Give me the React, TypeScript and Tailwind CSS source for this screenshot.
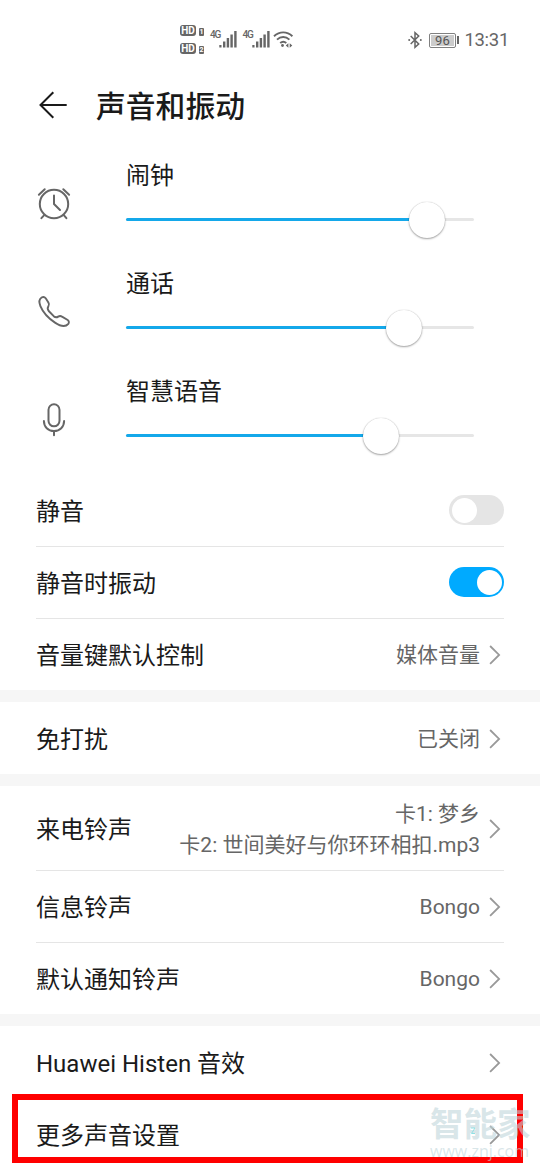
import React, { useState } from "react";

interface VolumeSliderProps {
  label: string;
  value: number;
  icon: React.ReactNode;
  onChange: (value: number) => void;
}

const AlarmIcon = () => (
  <svg width="36" height="36" viewBox="0 0 36 36" fill="none" stroke="#666" strokeWidth="2" strokeLinecap="round" strokeLinejoin="round">
    <circle cx="18" cy="18" r="14.2" />
    <path d="M18 9.5V18l6 6M2.9 8.8 8.7 3.2M33.1 8.8 27.3 3.2M8 29.3l-2.6 2.9M28 29.3l2.4 2.9" />
  </svg>
);

const PhoneIcon = () => (
  <svg width="36" height="36" viewBox="0 0 36 36" fill="none" stroke="#666" strokeWidth="1.9" strokeLinejoin="round">
    <path d="M5.6 3.5C7 2.6 8.7 2.9 9.7 4.3L12.4 8.4c.9 1.4.8 2.7 0 3.9-1.1 1.6-1 3 .3 4.7l5 5.2c1.5 1.3 3 1.4 4.5.4 1.2-.8 2.4-.9 3.8 0l5.3 3.2c1.7 1 2 2.7 1 4-2.5 3-7.4 2.7-13.3-1.2C11.9 23.9 7.1 18.6 4.4 12.1 3 8.6 3.1 5.1 5.6 3.5z" />
  </svg>
);

const MicIcon = () => (
  <svg width="36" height="36" viewBox="0 0 36 36" fill="none" stroke="#666" strokeWidth="2" strokeLinecap="round">
    <rect x="12.5" y="2.3" width="11" height="22" rx="5.5" />
    <path d="M7.9 19c0 5.8 4.2 10 10.1 10s10.1-4.2 10.1-10M18 29v4.3" />
  </svg>
);

const Chevron = () => (
  <svg className="ml-[6px] shrink-0" width="18" height="24" viewBox="0 0 18 24" fill="none" stroke="#999" strokeWidth="1.8">
    <path d="M4.1 3 13.1 11.9l-9 8.9" />
  </svg>
);

const SignalIcon = () => (
  <div className="flex w-[28px] items-start">
    <span className="w-[9px] text-[10px] leading-[10px] font-medium tracking-[-1.2px]">4G</span>
    <svg className="shrink-0" width="19" height="18" viewBox="0 0 19 18" fill="#666">
      <rect x="0.3" y="15" width="2.2" height="2.5" />
      <rect x="4" y="11.5" width="2.4" height="6" />
      <rect x="7.7" y="8" width="2.4" height="9.5" />
      <rect x="11.4" y="4.5" width="2.4" height="13" />
      <rect x="15.2" y="1" width="2.4" height="16.5" />
    </svg>
  </div>
);

const HdBadge = ({ sim }: { sim: number }) => (
  <div className="flex items-end gap-[3px]">
    <span className="flex h-[11px] w-[16px] items-center justify-center rounded-[3px] bg-[#666] pt-px text-[10px] leading-none font-bold text-white">
      HD
    </span>
    <span className="flex h-[8px] w-[5px] items-center justify-center rounded-[1px] bg-[#666] pt-px text-[7px] leading-none font-bold text-white">
      {sim}
    </span>
  </div>
);

const StatusBar = () => (
  <div className="flex h-[78px] items-start justify-between pr-[31px] pl-[180px] text-[#666]">
    <div className="flex">
      <div className="mt-[25px] flex flex-col gap-[7px]">
        <HdBadge sim={1} />
        <HdBadge sim={2} />
      </div>
      <div className="mt-[30px] ml-[6px] flex gap-[4.500px]">
        <SignalIcon />
        <SignalIcon />
      </div>
      <svg className="mt-[30px] ml-[2.5px]" width="22" height="20" viewBox="0 0 22 20" fill="none" stroke="#666" strokeWidth="1.9">
        <path d="M1 6.2c5.5-5.1 13-5.1 18.4 0M4 9.6c3.7-3.5 8.7-3.5 12.400 0M7.2 13c1.900-1.700 4.200-1.700 6.100 0" />
        <circle cx="9.500" cy="15.500" r="1.400" fill="#666" stroke="none" />
        <path d="m15.400 13.200-2.600 2.300 2.600 2.300zM16.700 13.200l2.600 2.300-2.600 2.300z" fill="#666" stroke="none" />
      </svg>
    </div>
    <div className="mt-[29px] flex h-[22px] items-center">
      <svg width="14" height="18" viewBox="0 0 14 18" fill="none" stroke="#666" strokeWidth="1.5">
        <path d="m2.7 5 8 8L7 16.3V1.7L10.7 5l-8 8" />
        <circle cx="1.2" cy="9" r="1" fill="#666" stroke="none" />
        <circle cx="12.8" cy="9" r="1" fill="#666" stroke="none" />
      </svg>
      <div className="ml-[7px] flex h-[15px] w-[27px] rounded-[2px] border border-[#808080] p-px">
        <span className="flex flex-1 items-center justify-center bg-[#ccc] pt-px text-[13px] leading-none text-[#555]">96</span>
      </div>
      <div className="ml-px h-[8px] w-[2px] bg-[#666]" />
      <span className="ml-[5.5px] text-[18.5px] leading-[22px] tracking-[-0.3px]">13:31</span>
    </div>
  </div>
);

const VolumeSlider: React.FC<VolumeSliderProps> = ({ label, value, icon, onChange }) => (
  <div className="flex h-[108px] pl-9">
    <div className="w-[90px] pt-[36px]">{icon}</div>
    <div className="w-[348px] pt-[8px]">
      <div className="text-2xl leading-9">{label}</div>
      <div className="relative mt-[7.5px] flex h-9 items-center">
        <div className="h-[3px] w-full rounded-full bg-[#e6e6e6]">
          <div className="h-full rounded-full bg-[#14a8ea]" style={{ width: `${value}%` }} />
        </div>
        <div
          className="absolute top-0 size-9 -translate-x-1/2 rounded-full bg-white shadow-[0_1px_2px_rgba(0,0,0,0.35),0_0_1px_rgba(0,0,0,0.25)]"
          style={{ left: `${value}%` }}
        />
        <input
          type="range"
          aria-label={label}
          value={value}
          step="0.1"
          onChange={(e) => onChange(Number(e.target.value))}
          className="absolute inset-0 h-full w-full cursor-pointer opacity-0"
        />
      </div>
    </div>
  </div>
);

const Toggle = ({ checked, onClick }: { checked: boolean; onClick: () => void }) => (
  <button
    role="switch"
    aria-checked={checked}
    onClick={onClick}
    className={`mb-px flex h-[30px] w-[55px] items-center rounded-full px-[2.5px] ${
      checked ? "justify-end bg-[#00aaff]" : "justify-start bg-[#e5e5e5]"
    }`}
  >
    <span className="size-[25px] rounded-full bg-white" />
  </button>
);

const Row = ({ label, children, tall, first }: { label: string; children?: React.ReactNode; tall?: boolean; first?: boolean }) => (
  <div
    className={`mx-9 flex items-center justify-between ${tall ? "h-[84px]" : "h-[72px]"} ${
      first ? "pt-px" : "border-t border-[#e5e5e5]"
    }`}
  >
    <span className="pt-[2px] text-2xl">{label}</span>
    {children}
  </div>
);

const Value = ({ lines = [] }: { lines?: string[] }) => (
  <div className="flex items-center">
    <div className="pt-[2px] text-right text-[21px] leading-[31px] text-[#666]">
      {lines.map((line) => (
        <div key={line}>{line}</div>
      ))}
    </div>
    <Chevron />
  </div>
);

const Gap = () => <div className="h-3 bg-[#f6f6f6]" />;

const App: React.FC = () => {
  const [volumes, setVolumes] = useState({ alarm: 86.6, call: 80, voice: 73.3 });
  const [mute, setMute] = useState(false);
  const [vibrate, setVibrate] = useState(true);

  return (
    <div className="relative h-[1170px] w-[540px] overflow-hidden bg-white font-[Roboto,'Noto_Sans_CJK_SC',sans-serif] text-[#1a1a1a]">
      <StatusBar />
      <div className="flex h-[72px] items-start pl-[38px]">
        <svg className="mt-[13px]" width="30" height="28" viewBox="0 0 30 28" fill="none" stroke="#1a1a1a" strokeWidth="2">
          <path d="M28.7 14H3M15.3 1.2 2.5 14l12.8 12.8" />
        </svg>
        <h1 className="mt-[9px] ml-[28px] text-[29.8px] leading-[40px] font-medium">声音和振动</h1>
      </div>

      <VolumeSlider label="闹钟" value={volumes.alarm} icon={<AlarmIcon />} onChange={(alarm) => setVolumes({ ...volumes, alarm })} />
      <VolumeSlider label="通话" value={volumes.call} icon={<PhoneIcon />} onChange={(call) => setVolumes({ ...volumes, call })} />
      <VolumeSlider label="智慧语音" value={volumes.voice} icon={<MicIcon />} onChange={(voice) => setVolumes({ ...volumes, voice })} />

      <Row label="静音" first>
        <Toggle checked={mute} onClick={() => setMute(!mute)} />
      </Row>
      <Row label="静音时振动">
        <Toggle checked={vibrate} onClick={() => setVibrate(!vibrate)} />
      </Row>
      <Row label="音量键默认控制">
        <Value lines={["媒体音量"]} />
      </Row>
      <Gap />
      <Row label="免打扰" first>
        <Value lines={["已关闭"]} />
      </Row>
      <Gap />
      <Row label="来电铃声" tall first>
        <Value lines={["卡1: 梦乡", "卡2: 世间美好与你环环相扣.mp3"]} />
      </Row>
      <Row label="信息铃声">
        <Value lines={["Bongo"]} />
      </Row>
      <Row label="默认通知铃声">
        <Value lines={["Bongo"]} />
      </Row>
      <Gap />
      <Row label="Huawei Histen 音效" first>
        <Value />
      </Row>
      <Row label="更多声音设置" first>
        <Value />
      </Row>

      {/* highlight frame and site watermark */}
      <div className="pointer-events-none absolute top-[1094px] left-[12px] h-[69px] w-[511px] border-[6px] border-[#ff0000]" />
      <div className="pointer-events-none absolute top-[1108px] left-[430px] w-[102px] text-[#bfd5da]/60">
        <div className="text-[33.5px] leading-[34px] font-bold whitespace-nowrap">智能家</div>
        <div className="font-['Open_Sans',sans-serif] text-[16px] leading-[18px] whitespace-nowrap">www.znj.com</div>
        <svg className="absolute top-[19px] left-[40px]" width="6" height="8" viewBox="0 0 6 8" fill="none" stroke="#8fe0e4" strokeWidth="1">
          <path d="M1 1h4L1.5 6.5H5" />
        </svg>
      </div>
    </div>
  );
};

export default App;
